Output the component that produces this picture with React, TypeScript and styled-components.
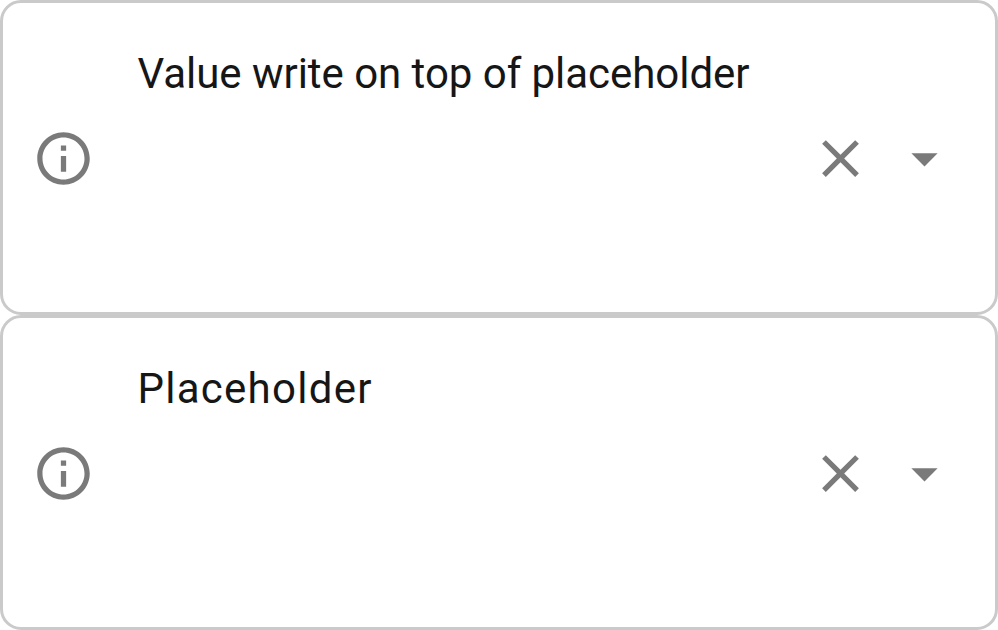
import React from "react";
import styled, { createGlobalStyle } from "styled-components";

const GlobalStyle = createGlobalStyle`
  * { box-sizing: border-box; }
  body { margin: 0; background: #fff; font-family: Roboto, sans-serif; }
`;

const Stack = styled.main`
  display: flex;
  flex-direction: column;
  width: 998px;
`;

const Field = styled.section`
  display: flex;
  height: 315px;
  padding: 0 39px 0 29px;
  border: 3px solid #cacaca;
  border-radius: 21px;
  background: #fff;
`;

const Icon = styled.svg<{ $gap?: number }>`
  flex: none;
  width: 63px;
  height: 63px;
  margin-top: 124px;
  margin-left: ${(p) => p.$gap ?? 0}px;
  fill: #7a7a7a;
`;

const Label = styled.div<{ $spacing: number }>`
  flex: 1;
  margin: 46px 0 0 42.5px;
  font-size: 42px;
  line-height: 49px;
  letter-spacing: ${(p) => p.$spacing}px;
  color: #161616;
  white-space: nowrap;
`;

const fields = [
  { text: "Value write on top of placeholder", spacing: -0.04 },
  { text: "Placeholder", spacing: 1.26 },
];

export default function App() {
  return (
    <>
      <GlobalStyle />
      <Stack>
        {fields.map((field) => (
          <Field key={field.text}>
            <Icon viewBox="0 0 24 24">
              <path d="M11 7h2v2h-2zm0 4h2v6h-2zm1-9C6.48 2 2 6.48 2 12s4.48 10 10 10 10-4.48 10-10S17.52 2 12 2zm0 18c-4.41 0-8-3.59-8-8s3.59-8 8-8 8 3.59 8 8-3.59 8-8 8z" />
            </Icon>
            <Label $spacing={field.spacing}>{field.text}</Label>
            <Icon viewBox="0 0 24 24">
              <path d="M19 6.41 17.59 5 12 10.59 6.41 5 5 6.41 10.59 12 5 17.59 6.41 19 12 13.41 17.59 19 19 17.59 13.41 12z" />
            </Icon>
            <Icon viewBox="0 0 24 24" $gap={21}>
              <path d="m7 10 5 5 5-5z" />
            </Icon>
          </Field>
        ))}
      </Stack>
    </>
  );
}
